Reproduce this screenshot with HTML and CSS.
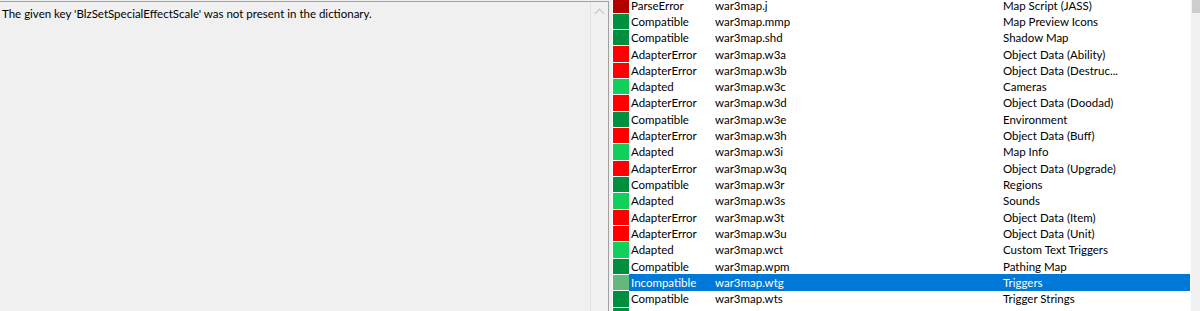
FILE: index.html
```html
<!DOCTYPE html>
<html>
<head>
<meta charset="utf-8">
<link rel="stylesheet" href="styles.css">
</head>
<body>
<div class="app">
  <div class="log-pane">
    <div class="log-text">The given key 'BlzSetSpecialEffectScale' was not present in the dictionary.</div>
    <div class="log-scroll"><span class="arrow-up"></span></div>
  </div>
  <div class="splitter"></div>
  <div class="list">
    <div class="rows">
      <div class="row"><span class="sw parse"></span><div class="cells"><span class="c1">ParseError</span><span class="c2">war3map.j</span><span class="c3">Map Script (JASS)</span></div></div>
      <div class="row"><span class="sw compat"></span><div class="cells"><span class="c1">Compatible</span><span class="c2">war3map.mmp</span><span class="c3">Map Preview Icons</span></div></div>
      <div class="row"><span class="sw compat"></span><div class="cells"><span class="c1">Compatible</span><span class="c2">war3map.shd</span><span class="c3">Shadow Map</span></div></div>
      <div class="row"><span class="sw aerr"></span><div class="cells"><span class="c1">AdapterError</span><span class="c2">war3map.w3a</span><span class="c3">Object Data (Ability)</span></div></div>
      <div class="row"><span class="sw aerr"></span><div class="cells"><span class="c1">AdapterError</span><span class="c2">war3map.w3b</span><span class="c3">Object Data (Destruc...</span></div></div>
      <div class="row"><span class="sw adapt"></span><div class="cells"><span class="c1">Adapted</span><span class="c2">war3map.w3c</span><span class="c3">Cameras</span></div></div>
      <div class="row"><span class="sw aerr"></span><div class="cells"><span class="c1">AdapterError</span><span class="c2">war3map.w3d</span><span class="c3">Object Data (Doodad)</span></div></div>
      <div class="row"><span class="sw compat"></span><div class="cells"><span class="c1">Compatible</span><span class="c2">war3map.w3e</span><span class="c3">Environment</span></div></div>
      <div class="row"><span class="sw aerr"></span><div class="cells"><span class="c1">AdapterError</span><span class="c2">war3map.w3h</span><span class="c3">Object Data (Buff)</span></div></div>
      <div class="row"><span class="sw adapt"></span><div class="cells"><span class="c1">Adapted</span><span class="c2">war3map.w3i</span><span class="c3">Map Info</span></div></div>
      <div class="row"><span class="sw aerr"></span><div class="cells"><span class="c1">AdapterError</span><span class="c2">war3map.w3q</span><span class="c3">Object Data (Upgrade)</span></div></div>
      <div class="row"><span class="sw compat"></span><div class="cells"><span class="c1">Compatible</span><span class="c2">war3map.w3r</span><span class="c3">Regions</span></div></div>
      <div class="row"><span class="sw adapt"></span><div class="cells"><span class="c1">Adapted</span><span class="c2">war3map.w3s</span><span class="c3">Sounds</span></div></div>
      <div class="row"><span class="sw aerr"></span><div class="cells"><span class="c1">AdapterError</span><span class="c2">war3map.w3t</span><span class="c3">Object Data (Item)</span></div></div>
      <div class="row"><span class="sw aerr"></span><div class="cells"><span class="c1">AdapterError</span><span class="c2">war3map.w3u</span><span class="c3">Object Data (Unit)</span></div></div>
      <div class="row"><span class="sw adapt"></span><div class="cells"><span class="c1">Adapted</span><span class="c2">war3map.wct</span><span class="c3">Custom Text Triggers</span></div></div>
      <div class="row"><span class="sw compat"></span><div class="cells"><span class="c1">Compatible</span><span class="c2">war3map.wpm</span><span class="c3">Pathing Map</span></div></div>
      <div class="row selected"><span class="sw incompat"></span><div class="cells"><span class="c1">Incompatible</span><span class="c2">war3map.wtg</span><span class="c3">Triggers</span></div></div>
      <div class="row"><span class="sw compat"></span><div class="cells"><span class="c1">Compatible</span><span class="c2">war3map.wts</span><span class="c3">Trigger Strings</span></div></div>
      <div class="row"><span class="sw compat"></span><div class="cells"></div></div>
    </div>
  </div>
  <div class="vscroll"><div class="thumb"></div></div>
</div>
</body>
</html>
```

FILE: styles.css
```css
* { box-sizing: border-box; }
html, body { margin: 0; padding: 0; }
body {
  width: 1200px;
  height: 311px;
  overflow: hidden;
  background: #f0f0f0;
  font-family: Lato, "Noto Sans", sans-serif;
  font-size: 11.5px;
  color: #000;
}
.app {
  display: flex;
  height: 311px;
}
.log-pane {
  width: 609px;
  height: 311px;
  margin-top: 1px;
  border-top: 1px solid #a0a0a0;
  border-right: 1px solid #a0a0a0;
  display: flex;
  background: #f0f0f0;
}
.log-text {
  flex: 1;
  padding: 4px 0 0 2px;
  line-height: 16px;
}
.log-scroll {
  width: 18px;
  border-left: 1px solid #e3e3e3;
  display: flex;
  justify-content: center;
  padding-top: 8px;
}
.arrow-up {
  width: 7px;
  height: 7px;
  border-left: 1.5px solid #c2c2c2;
  border-top: 1.5px solid #c2c2c2;
  transform: rotate(45deg);
}
.splitter {
  width: 3px;
  background: #f0f0f0;
}
.list {
  width: 579px;
  height: 311px;
  background: #fff;
  overflow: hidden;
}
.rows {
  margin-top: -3.17px;
}
.row {
  display: flex;
  height: 16.333px;
}
.sw {
  width: 16px;
  height: 15.333px;
  margin-left: 1px;
  margin-top: 0.5px;
}
.parse { background: #b40000; }
.compat { background: #008f3e; }
.aerr { background: #ff0000; }
.adapt { background: #11cf5b; }
.incompat { background: #63b97c; }
.cells {
  flex: 1;
  display: flex;
  align-items: center;
  margin-right: 1px;
  padding-top: 1px;
  line-height: 16px;
  white-space: nowrap;
}
.c1 { width: 84px; padding-left: 2px; }
.c2 { width: 288px; padding-left: 2px; }
.c3 { flex: 1; padding-left: 2px; }
.selected .cells {
  background: #0078d7;
  color: #fff;
}
.vscroll {
  flex: 1;
  background: #f0f0f0;
  padding-left: 1px;
}
.thumb {
  height: 13px;
  background: #cdcdcd;
}
```
